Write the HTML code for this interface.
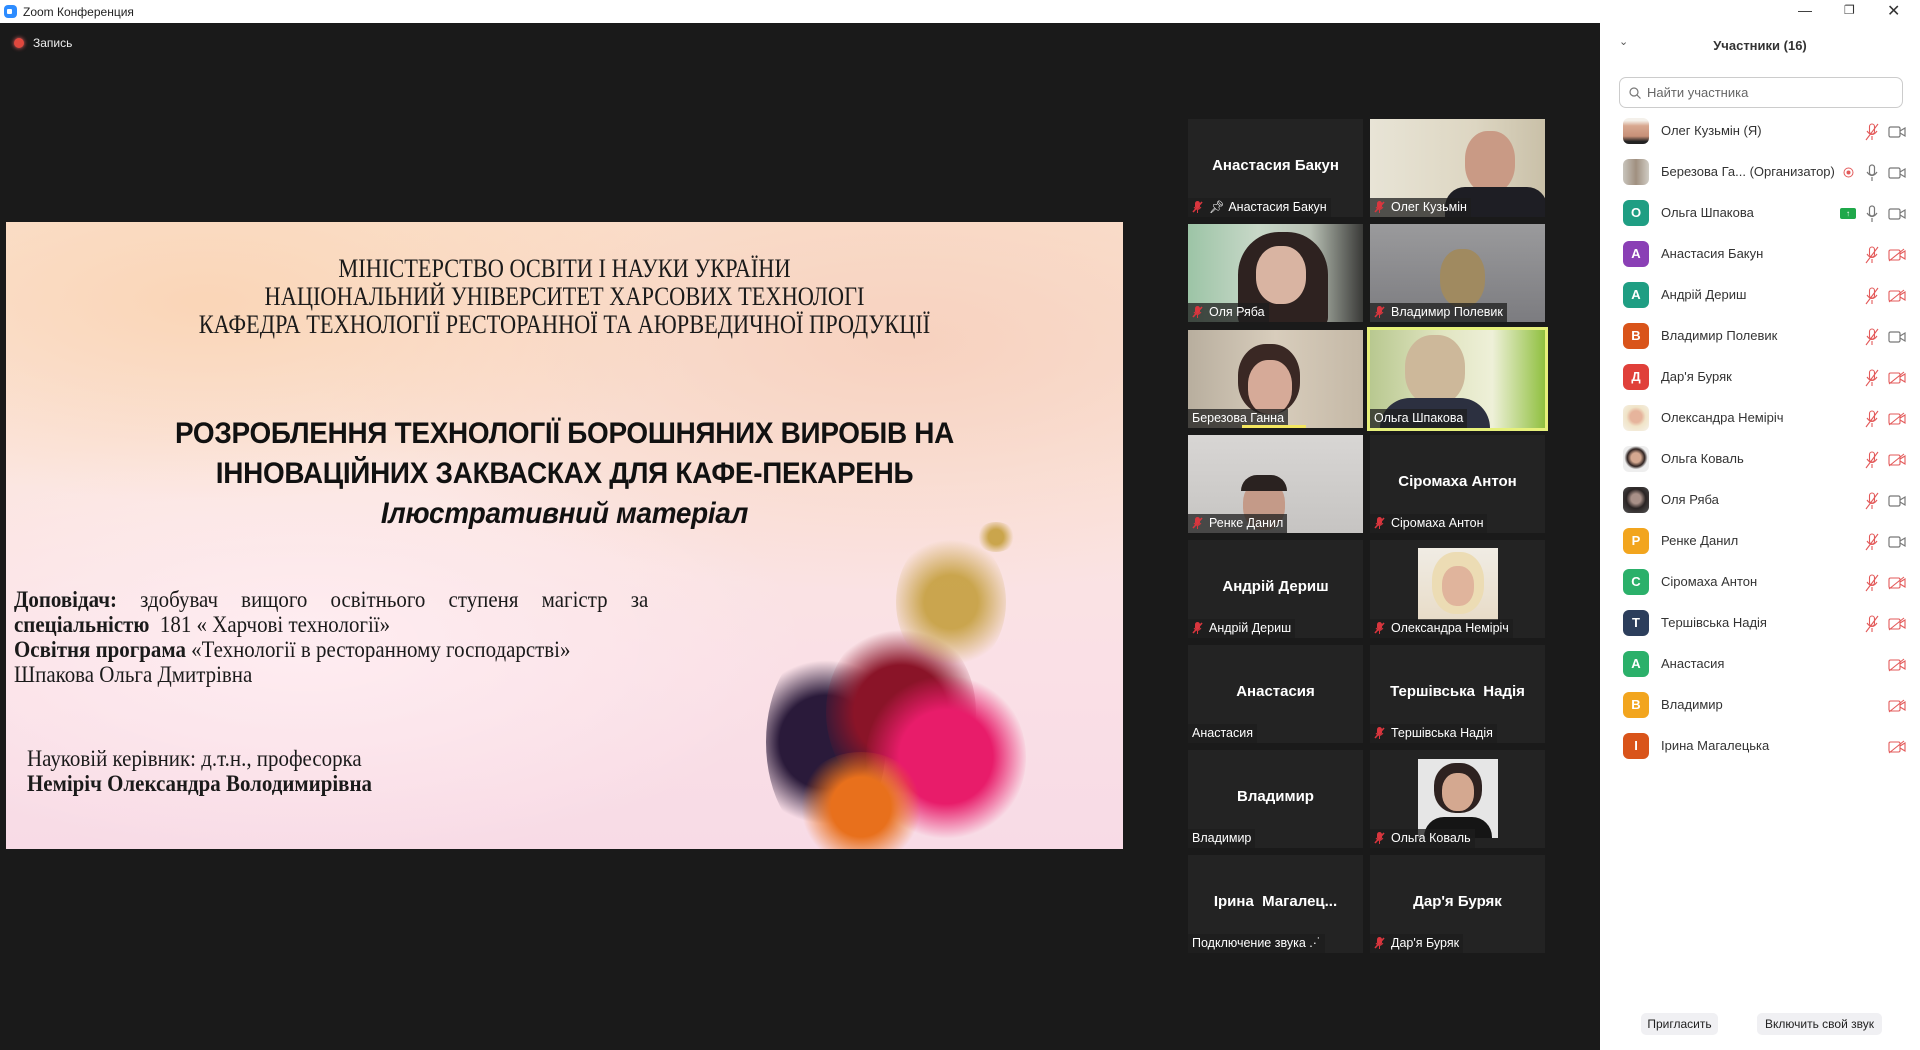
<!DOCTYPE html>
<html><head><meta charset="utf-8">
<style>
*{margin:0;padding:0;box-sizing:border-box}
body{width:1920px;height:1050px;overflow:hidden;background:#1a1a1a;font-family:"Liberation Sans","DejaVu Sans",sans-serif;position:relative}
.title{position:absolute;left:0;top:0;width:1920px;height:23px;background:#fff;color:#222;font-size:12px}
.title .logo{position:absolute;left:4px;top:5px;width:13px;height:13px;border-radius:4px;background:#2d8cff}
.title .logo:after{content:"";position:absolute;left:3px;top:4px;width:5px;height:5px;background:#fff;border-radius:1px}
.title span{position:absolute;left:23px;top:5px}
.wc{position:absolute;top:2px;font-size:14px;color:#333}
.rec{position:absolute;left:14px;top:38px;width:10px;height:10px;border-radius:50%;background:#e0483e;box-shadow:0 0 4px #f66}
.rect{position:absolute;left:33px;top:36px;color:#eee;font-size:12px}
.slide{position:absolute;left:6px;top:222px;width:1117px;height:627px;overflow:hidden;
background:radial-gradient(ellipse 500px 200px at 200px 80px,rgba(250,212,180,.9),transparent),radial-gradient(ellipse 600px 250px at 900px 120px,rgba(246,205,185,.8),transparent),radial-gradient(ellipse 500px 220px at 300px 420px,rgba(255,238,242,.9),transparent),linear-gradient(180deg,#fbe2cf 0%,#fbe6e0 40%,#fae0e6 70%,#f8dbe6 100%)}
.serif{font-family:"Liberation Serif",serif;color:#1a1a1a}
.hdr{position:absolute;left:0;width:1117px;text-align:center;font-size:26px;line-height:28px;top:33px;transform:scaleX(.86)}
.big{position:absolute;left:0;width:1117px;text-align:center;font-weight:bold;font-size:30px;line-height:40px;top:192px;color:#111;transform:scaleX(.93);letter-spacing:-.3px}
.it{font-style:italic}
.txt{position:absolute;font-size:23px;line-height:25px;transform-origin:left;transform:scaleX(.91);white-space:nowrap}
.splash{position:absolute;border-radius:50%}
.tile{position:absolute;width:175px;height:98px;background:#232323;overflow:hidden}
.tile .nm{position:absolute;left:0;right:0;top:38px;text-align:center;color:#fff;font-weight:bold;font-size:15px}
.tile .lb{position:absolute;left:0;bottom:0;height:19px;background:rgba(30,30,30,.75);color:#fff;font-size:12.5px;padding:2px 4px 0 4px;white-space:nowrap}
.mu{display:inline-block;width:11px;height:12px;vertical-align:-2px;margin-right:6px}
.panel{position:absolute;left:1600px;top:23px;width:320px;height:1027px;background:#fff}
.ph{position:absolute;left:0;right:0;top:15px;text-align:center;font-weight:bold;font-size:13px;color:#333}
.search{position:absolute;left:19px;top:54px;width:284px;height:31px;border:1px solid #ccc;border-radius:7px;font-size:13px;color:#666;padding:7px 0 0 27px}
.row{position:absolute;left:0;width:308px;height:41px;font-size:13px;color:#333}
.av{position:absolute;left:11px;top:-13px;width:26px;height:26px;border-radius:6px;color:#fff;font-weight:bold;font-size:13px;text-align:center;line-height:26px}
.rn{position:absolute;left:49px;top:-8px;white-space:nowrap}
.ic{position:absolute;top:-8px}
.btn{position:absolute;top:1013px;height:22px;background:#f0f0f3;border-radius:5px;font-size:12px;color:#222;text-align:center;line-height:22px}
</style></head><body>
<div class="title"><div class="logo"></div><span>Zoom Конференция</span>
<div class="wc" style="left:1798px">—</div><div class="wc" style="left:1844px;top:3px;font-size:12px">❐</div><div class="wc" style="left:1887px;top:1px;font-size:16px">✕</div></div>
<div class="rec"></div><div class="rect">Запись</div>

<div class="slide">
 <div class="splash" style="left:760px;top:420px;width:120px;height:200px;background:radial-gradient(circle,#2a1a3a 40%,transparent 70%)"></div>
 <div class="splash" style="left:820px;top:400px;width:150px;height:180px;background:radial-gradient(circle,#8a1428 40%,transparent 70%)"></div>
 <div class="splash" style="left:860px;top:450px;width:160px;height:170px;background:radial-gradient(circle,#e81c6a 40%,transparent 70%)"></div>
 <div class="splash" style="left:790px;top:530px;width:130px;height:110px;background:radial-gradient(circle,#e8701c 35%,transparent 70%)"></div>
 <div class="splash" style="left:890px;top:310px;width:110px;height:140px;background:radial-gradient(circle,rgba(190,150,40,.8) 30%,transparent 70%)"></div>
 <div class="splash" style="left:970px;top:300px;width:40px;height:30px;background:radial-gradient(circle,rgba(190,150,40,.8) 30%,transparent 70%)"></div>
 <div class="hdr serif">МІНІСТЕРСТВО ОСВІТИ І НАУКИ УКРАЇНИ<br>НАЦІОНАЛЬНИЙ УНІВЕРСИТЕТ ХАРСОВИХ ТЕХНОЛОГІ<br>КАФЕДРА ТЕХНОЛОГІЇ РЕСТОРАННОЇ ТА АЮРВЕДИЧНОЇ ПРОДУКЦІЇ</div>
 <div class="big">РОЗРОБЛЕННЯ ТЕХНОЛОГІЇ БОРОШНЯНИХ ВИРОБІВ НА<br>ІННОВАЦІЙНИХ ЗАКВАСКАХ ДЛЯ КАФЕ-ПЕКАРЕНЬ<br><span class="it">Ілюстративний матеріал</span></div>
 <div class="txt serif" style="left:8px;top:365px;width:697px;white-space:normal;text-align:justify;text-align-last:justify;height:25px;overflow:hidden"><b>Доповідач:</b> здобувач вищого освітнього ступеня магістр за</div>
 <div class="txt serif" style="left:8px;top:390px"><b>спеціальністю</b> &nbsp;181 « Харчові технології»</div>
 <div class="txt serif" style="left:8px;top:415px"><b>Освітня програма</b> «Технології в ресторанному господарстві»</div>
 <div class="txt serif" style="left:8px;top:440px">Шпакова Ольга Дмитрівна</div>
 <div class="txt serif" style="left:21px;top:524px">Науковій керівник: д.т.н., професорка</div>
 <div class="txt serif" style="left:21px;top:549px"><b>Немірiч Олександра Володимирівна</b></div>
</div>

<svg width="0" height="0" style="position:absolute"><defs>
<symbol id="mm" viewBox="0 0 11 12"><rect x="3" y="0" width="5" height="8" rx="2.5" fill="#d9363e"/><path d="M1 11L10 1" stroke="#d9363e" stroke-width="1.6"/><path d="M2 6q3.5 5 7 0M5.5 9v3" stroke="#d9363e" fill="none"/></symbol>
<symbol id="mic" viewBox="0 0 14 18"><rect x="4.5" y="1" width="5" height="10" rx="2.5" fill="none" stroke="#777" stroke-width="1.2"/><path d="M2 8q5 7 10 0M7 13v4" stroke="#777" fill="none" stroke-width="1.2"/></symbol>
<symbol id="mmr" viewBox="0 0 14 18"><rect x="4.5" y="1" width="5" height="10" rx="2.5" fill="none" stroke="#e35a5a" stroke-width="1.1"/><path d="M2 8q5 7 10 0M7 13v4M1 17L13 1" stroke="#e35a5a" fill="none" stroke-width="1.1"/></symbol>
<symbol id="cam" viewBox="0 0 18 14"><rect x="1" y="2" width="11" height="10" rx="1.5" fill="none" stroke="#777" stroke-width="1.2"/><path d="M12 6l5-3v8l-5-3" stroke="#777" fill="none" stroke-width="1.2"/></symbol>
<symbol id="camr" viewBox="0 0 18 14"><rect x="1" y="2" width="11" height="10" rx="1.5" fill="none" stroke="#e35a5a" stroke-width="1.1"/><path d="M12 6l5-3v8l-5-3M1 13L16 1" stroke="#e35a5a" fill="none" stroke-width="1.1"/></symbol>
</defs></svg>

<!-- tiles -->
<div class="tile" style="left:1188px;top:119px"><div class="nm">Анастасия Бакун</div><div class="lb"><svg class="mu"><use href="#mm"/></svg>📌&#xFE0E; Анастасия Бакун</div></div>
<div class="tile" style="left:1370px;top:119px;background:linear-gradient(90deg,#e8e4d6,#ddd6c2 60%,#c9c0a8)"><div style="position:absolute;left:95px;top:12px;width:50px;height:62px;border-radius:45%;background:#c99a85"></div><div style="position:absolute;left:75px;top:68px;width:102px;height:40px;background:#1e1e24;border-radius:20px 20px 0 0"></div><div class="lb"><svg class="mu"><use href="#mm"/></svg>Олег Кузьмін</div></div>
<div class="tile" style="left:1188px;top:224px;background:linear-gradient(90deg,#9cc4a6,#c8d8c8 40%,#b8c0b4 70%,#3a3a38)"><div style="position:absolute;left:50px;top:8px;width:90px;height:95px;border-radius:45% 45% 10% 10%;background:#2e2220"></div><div style="position:absolute;left:68px;top:22px;width:50px;height:58px;border-radius:45%;background:#d9b4a2"></div><div class="lb"><svg class="mu"><use href="#mm"/></svg>Оля Ряба</div></div>
<div class="tile" style="left:1370px;top:224px;background:linear-gradient(180deg,#9a9a9c,#7c7c80)"><div style="position:absolute;left:70px;top:25px;width:45px;height:58px;border-radius:45%;background:#a08a60"></div><div class="lb"><svg class="mu"><use href="#mm"/></svg>Владимир Полевик</div></div>
<div class="tile" style="left:1188px;top:330px;background:linear-gradient(90deg,#b8ae9e,#d8cdbc 50%,#c4b8a6)"><div style="position:absolute;left:50px;top:14px;width:62px;height:70px;border-radius:45%;background:#3a2824"></div><div style="position:absolute;left:60px;top:30px;width:44px;height:54px;border-radius:45%;background:#d6aa98"></div><div class="lb">Березова Ганна</div><div style="position:absolute;left:54px;bottom:0;width:64px;height:3px;background:#f3e660"></div></div>
<div class="tile" style="left:1367px;top:327px;width:181px;height:104px;border:3px solid #e6f07a;background:linear-gradient(90deg,#b8c890,#e0e4c0 40%,#eef0d8 70%,#90c040)"><div style="position:absolute;left:35px;top:5px;width:60px;height:70px;border-radius:45%;background:#cdb89a"></div><div style="position:absolute;left:10px;top:68px;width:110px;height:40px;border-radius:30px 30px 0 0;background:#2c3040"></div><div class="lb" style="left:0;bottom:0">Ольга Шпакова</div></div>
<div class="tile" style="left:1188px;top:435px;background:linear-gradient(180deg,#d8d6d4,#c6c4c2)"><div style="position:absolute;left:55px;top:45px;width:42px;height:50px;border-radius:45%;background:#c49a88"></div><div style="position:absolute;left:53px;top:40px;width:46px;height:16px;border-radius:20px 20px 0 0;background:#2a2220"></div><div class="lb"><svg class="mu"><use href="#mm"/></svg>Ренке Данил</div></div>
<div class="tile" style="left:1370px;top:435px"><div class="nm">Сіромаха Антон</div><div class="lb"><svg class="mu"><use href="#mm"/></svg>Сіромаха Антон</div></div>
<div class="tile" style="left:1188px;top:540px"><div class="nm">Андрій Дериш</div><div class="lb"><svg class="mu"><use href="#mm"/></svg>Андрій Дериш</div></div>
<div class="tile" style="left:1370px;top:540px"><div style="position:absolute;left:48px;top:8px;width:80px;height:72px;background:linear-gradient(180deg,#f0ece4,#e8dcc8)"><div style="position:absolute;left:14px;top:4px;width:52px;height:62px;border-radius:45%;background:#ecdcb4"></div><div style="position:absolute;left:24px;top:18px;width:32px;height:40px;border-radius:45%;background:#e0b49c"></div></div><div class="lb"><svg class="mu"><use href="#mm"/></svg>Олександра Немірiч</div></div>
<div class="tile" style="left:1188px;top:645px"><div class="nm">Анастасия</div><div class="lb">Анастасия</div></div>
<div class="tile" style="left:1370px;top:645px"><div class="nm">Тершівська &nbsp;Надія</div><div class="lb"><svg class="mu"><use href="#mm"/></svg>Тершівська Надія</div></div>
<div class="tile" style="left:1188px;top:750px"><div class="nm">Владимир</div><div class="lb">Владимир</div></div>
<div class="tile" style="left:1370px;top:750px"><div style="position:absolute;left:48px;top:9px;width:80px;height:79px;background:#e6e6e6"><div style="position:absolute;left:16px;top:4px;width:48px;height:50px;border-radius:45%;background:#2e2220"></div><div style="position:absolute;left:24px;top:14px;width:32px;height:38px;border-radius:45%;background:#d4a890"></div><div style="position:absolute;left:6px;top:58px;width:68px;height:21px;border-radius:20px 20px 0 0;background:#151515"></div></div><div class="lb"><svg class="mu"><use href="#mm"/></svg>Ольга Коваль</div></div>
<div class="tile" style="left:1188px;top:855px"><div class="nm">Ірина &nbsp;Магалец...</div><div class="lb">Подключение звука .·˙</div></div>
<div class="tile" style="left:1370px;top:855px"><div class="nm">Дар'я Буряк</div><div class="lb"><svg class="mu"><use href="#mm"/></svg>Дар'я Буряк</div></div>

<div class="panel">
 <div style="position:absolute;left:19px;top:12px;font-size:11px;color:#555">⌄</div>
 <div class="ph">Участники (16)</div>
 <div class="search"><svg style="position:absolute;left:9px;top:9px" width="12" height="12"><circle cx="5" cy="5" r="4" fill="none" stroke="#777" stroke-width="1.2"/><path d="M8 8l3.5 3.5" stroke="#777" stroke-width="1.2"/></svg>Найти участника</div>
</div>
<div class="btn" style="left:1641px;width:77px">Пригласить</div>
<div class="btn" style="left:1757px;width:125px">Включить свой звук</div>

<div style="position:absolute;left:1612px;top:0">
<div class="row" style="top:131px"><div class="av" style="background:linear-gradient(180deg,#f4f0ea 10%,#d8a890 30%,#c89078 70%,#222 90%)"></div><div class="rn">Олег Кузьмін (Я)</div><svg class="ic" style="left:253px" width="14" height="18"><use href="#mmr"/></svg><svg class="ic" style="left:276px;top:-6px" width="18" height="14"><use href="#cam"/></svg></div>
<div class="row" style="top:172px"><div class="av" style="background:linear-gradient(90deg,#c8c4bc,#a09080 50%,#d0ccc4)"></div><div class="rn">Березова Га... (Организатор)</div><svg class="ic" style="left:231px;top:-5px" width="11" height="11"><circle cx="5.5" cy="5.5" r="4.5" fill="none" stroke="#e35a5a"/><circle cx="5.5" cy="5.5" r="2" fill="#e35a5a"/></svg><svg class="ic" style="left:253px" width="14" height="18"><use href="#mic"/></svg><svg class="ic" style="left:276px;top:-6px" width="18" height="14"><use href="#cam"/></svg></div>
<div class="row" style="top:213px"><div class="av" style="background:#1f9e83">О</div><div class="rn">Ольга Шпакова</div><div class="ic" style="left:228px;top:-5px;width:16px;height:11px;background:#1fa84a;border-radius:2px;color:#fff;font-size:8px;text-align:center;line-height:11px">↑</div><svg class="ic" style="left:253px" width="14" height="18"><use href="#mic"/></svg><svg class="ic" style="left:276px;top:-6px" width="18" height="14"><use href="#cam"/></svg></div>
<div class="row" style="top:254px"><div class="av" style="background:#8a3fb5">А</div><div class="rn">Анастасия Бакун</div><svg class="ic" style="left:253px" width="14" height="18"><use href="#mmr"/></svg><svg class="ic" style="left:276px;top:-6px" width="18" height="14"><use href="#camr"/></svg></div>
<div class="row" style="top:295px"><div class="av" style="background:#1f9e83">А</div><div class="rn">Андрій Дериш</div><svg class="ic" style="left:253px" width="14" height="18"><use href="#mmr"/></svg><svg class="ic" style="left:276px;top:-6px" width="18" height="14"><use href="#camr"/></svg></div>
<div class="row" style="top:336px"><div class="av" style="background:#d9541a">В</div><div class="rn">Владимир Полевик</div><svg class="ic" style="left:253px" width="14" height="18"><use href="#mmr"/></svg><svg class="ic" style="left:276px;top:-6px" width="18" height="14"><use href="#cam"/></svg></div>
<div class="row" style="top:377px"><div class="av" style="background:#e0403a">Д</div><div class="rn">Дар'я Буряк</div><svg class="ic" style="left:253px" width="14" height="18"><use href="#mmr"/></svg><svg class="ic" style="left:276px;top:-6px" width="18" height="14"><use href="#camr"/></svg></div>
<div class="row" style="top:418px"><div class="av" style="background:radial-gradient(circle at 50% 45%,#e6b49c 30%,#f0e4c8 50%,#f6f2ea)"></div><div class="rn">Олександра Немірiч</div><svg class="ic" style="left:253px" width="14" height="18"><use href="#mmr"/></svg><svg class="ic" style="left:276px;top:-6px" width="18" height="14"><use href="#camr"/></svg></div>
<div class="row" style="top:459px"><div class="av" style="background:radial-gradient(circle at 50% 45%,#d4a890 25%,#2e2220 45%,#eee 60%)"></div><div class="rn">Ольга Коваль</div><svg class="ic" style="left:253px" width="14" height="18"><use href="#mmr"/></svg><svg class="ic" style="left:276px;top:-6px" width="18" height="14"><use href="#camr"/></svg></div>
<div class="row" style="top:500px"><div class="av" style="background:radial-gradient(circle at 50% 45%,#a89088 25%,#2a2424 50%,#555)"></div><div class="rn">Оля Ряба</div><svg class="ic" style="left:253px" width="14" height="18"><use href="#mmr"/></svg><svg class="ic" style="left:276px;top:-6px" width="18" height="14"><use href="#cam"/></svg></div>
<div class="row" style="top:541px"><div class="av" style="background:#f2a51e">Р</div><div class="rn">Ренке Данил</div><svg class="ic" style="left:253px" width="14" height="18"><use href="#mmr"/></svg><svg class="ic" style="left:276px;top:-6px" width="18" height="14"><use href="#cam"/></svg></div>
<div class="row" style="top:582px"><div class="av" style="background:#2bb06a">С</div><div class="rn">Сіромаха Антон</div><svg class="ic" style="left:253px" width="14" height="18"><use href="#mmr"/></svg><svg class="ic" style="left:276px;top:-6px" width="18" height="14"><use href="#camr"/></svg></div>
<div class="row" style="top:623px"><div class="av" style="background:#2c3e5c">Т</div><div class="rn">Тершівська Надія</div><svg class="ic" style="left:253px" width="14" height="18"><use href="#mmr"/></svg><svg class="ic" style="left:276px;top:-6px" width="18" height="14"><use href="#camr"/></svg></div>
<div class="row" style="top:664px"><div class="av" style="background:#2bb06a">А</div><div class="rn">Анастасия</div><svg class="ic" style="left:276px;top:-6px" width="18" height="14"><use href="#camr"/></svg></div>
<div class="row" style="top:705px"><div class="av" style="background:#f2a51e">В</div><div class="rn">Владимир</div><svg class="ic" style="left:276px;top:-6px" width="18" height="14"><use href="#camr"/></svg></div>
<div class="row" style="top:746px"><div class="av" style="background:#d9541a">І</div><div class="rn">Ірина Магалецька</div><svg class="ic" style="left:276px;top:-6px" width="18" height="14"><use href="#camr"/></svg></div>
</div>
</body></html>
